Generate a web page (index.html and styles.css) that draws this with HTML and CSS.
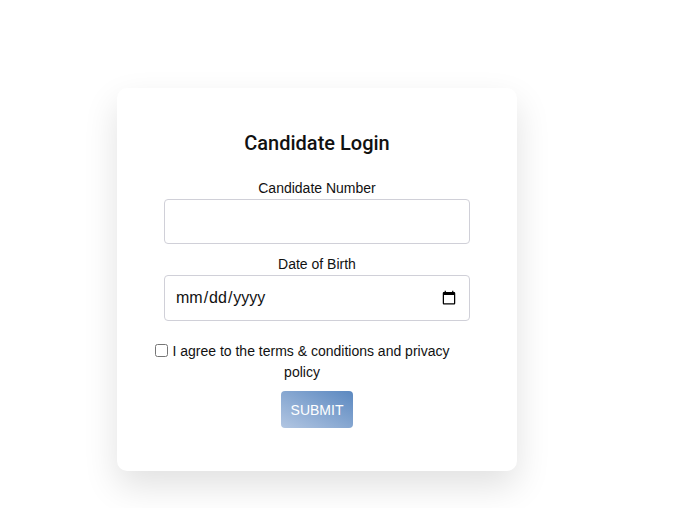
FILE: index.html
```html
<!DOCTYPE html>
<html lang="en">

<head>
    <meta charset="UTF-8">
    <meta name="viewport" content="width=device-width, initial-scale=1.0">
    <title>Candidate Login</title>
    <link rel="stylesheet" href="styles.css">
</head>

<body>
    <!-- Login Card -->
    <div class="login-card">
        <h2>Candidate Login</h2>
        <form class="login-form">
            <label for="candidateNumber">Candidate Number</label>
            <input type="text" id="candidateNumber" class="form-input">

            <label for="dob">Date of Birth</label>
            <input type="date" id="dob" class="form-input date-input">

            <div class="terms">
                <input type="checkbox" id="agree">
                <label for="agree">I agree to the terms &amp; conditions and privacy policy</label>
            </div>

            <button type="submit" class="submit-btn" disabled>SUBMIT</button>
        </form>
    </div>
</body>

</html>
```

FILE: styles.css
```css
body {
    font-family: "Liberation Sans", Arial, sans-serif;
    margin: 0;
    padding: 0;
    min-height: 100vh;
    background-color: #fff;
}

.login-card {
    width: 400px;
    margin: 88px 0 38px 117px;
    padding: 43px 0 43px;
    background-color: #fff;
    border-radius: 10px;
    box-shadow: 0 15px 35px rgba(0, 0, 0, 0.12);
    text-align: center;
}

.login-card h2 {
    font-family: Roboto, "Liberation Sans", sans-serif;
    font-size: 20px;
    line-height: 24px;
    font-weight: 500;
    color: #111;
    margin: 0 0 25px;
}

.login-form {
    display: flex;
    flex-direction: column;
    align-items: center;
}

.login-form > label {
    font-size: 14px;
    color: #111;
    line-height: 17px;
    margin-bottom: 2px;
}

.form-input {
    box-sizing: border-box;
    width: 306px;
    height: 45px;
    border: 1px solid #d0d0d8;
    border-radius: 4px;
    padding: 0 10px;
    font-family: "Liberation Sans", Arial, sans-serif;
    font-size: 16px;
    margin-bottom: 12px;
}

.date-input {
    height: 46px;
    color: #111;
    margin-bottom: 20px;
}

.terms {
    width: 300px;
    margin-left: -30px;
    font-size: 14px;
    line-height: 21px;
    color: #111;
}

.terms input {
    width: 13px;
    height: 13px;
    margin: 0 1px 0 0;
    vertical-align: -1px;
}

.submit-btn {
    margin-top: 8px;
    width: 72px;
    height: 37px;
    border: none;
    border-radius: 4px;
    background: linear-gradient(to top right, #b2c6e2, #5b88c0);
    color: #fff;
    font-family: "Liberation Sans", Arial, sans-serif;
    font-size: 14px;
    padding: 0;
}
```
